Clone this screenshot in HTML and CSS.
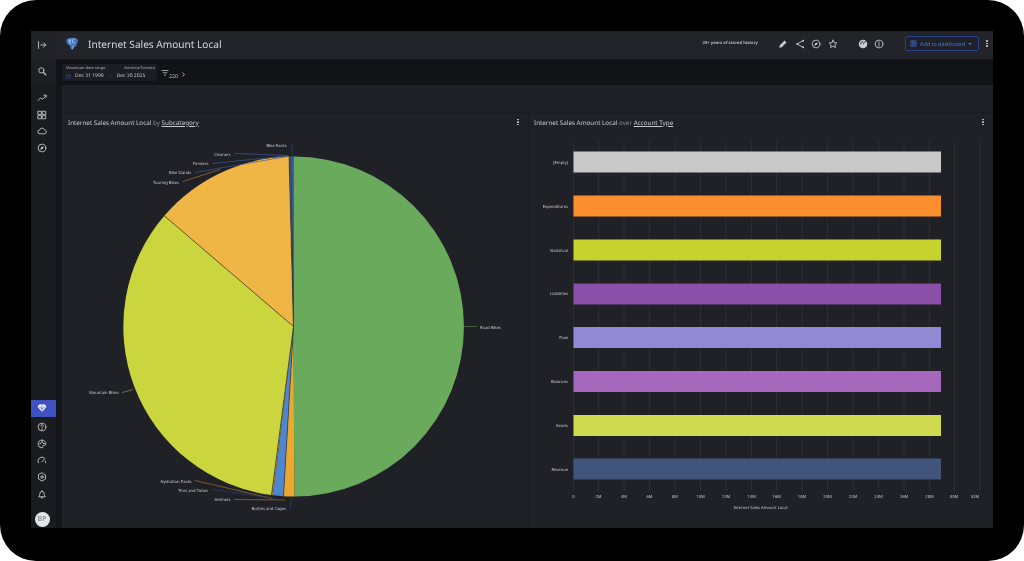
FILE: index.html
```html
<!DOCTYPE html>
<html lang="en">
<head>
<meta charset="utf-8">
<title>Internet Sales Amount Local</title>
<link rel="stylesheet" href="styles.css">
</head>
<body>
<div class="frame">
<div class="app">
  <nav class="sidebar">
    <div class="side-top"><svg class="ic" viewBox="0 0 16 16"><path d="M2.500 2.500v11M6 8h8M10.500 4.500 14 8l-3.500 3.500"/></svg></div>
    <div class="side-search"><svg class="ic" viewBox="0 0 16 16"><circle cx="7" cy="7" r="4.200"/><path d="m10.200 10.200 3.800 3.800" stroke-width="2"/></svg></div>
    <div class="side-nav">
      <div class="side-item"><svg class="ic" viewBox="0 0 16 16"><path d="M1.500 12 6 8l3 2 5.500-6M11 3.500h3.500V7"/></svg></div>
      <div class="side-item"><svg class="ic" viewBox="0 0 16 16"><path d="M2 2h5v5H2zM9 2h5v5H9zM2 9h5v5H2zM9 9h5v5H9z"/></svg></div>
      <div class="side-item"><svg class="ic" viewBox="0 0 16 16"><path d="M4.500 12.500a3 3 0 0 1-.5-6 4.200 4.200 0 0 1 8-.5 3.300 3.300 0 0 1 .3 6.500z"/></svg></div>
      <div class="side-item"><svg class="ic" viewBox="0 0 16 16"><circle cx="8" cy="8" r="6.200"/><path d="M11 5 9.300 9.300 5 11l1.700-4.300z" class="solid"/></svg></div>
    </div>
    <div class="side-bottom">
      <div class="side-item active"><svg class="ic" viewBox="0 0 16 16"><path class="solid" d="M3.500 2.500h9L15 6l-7 8.500L1 6z"/><path class="gem-cut" d="M4.500 6c0 2 2 3 3.500 3s3.500-1 3.500-3M8 4.500V13"/></svg></div>
      <div class="side-item"><svg class="ic" viewBox="0 0 16 16"><circle cx="8" cy="8" r="6.200"/><path d="M6 6.300a2 2 0 1 1 3 1.700c-.7.400-1 .8-1 1.700M8 11.200v.8"/></svg></div>
      <div class="side-item"><svg class="ic" viewBox="0 0 16 16"><path d="M8 1.800a6.200 6.200 0 1 0 0 12.400c1.500 0 1.500-1.200 1-2-.6-1 0-2 1.200-2h2c1.200 0 2-1 2-2.300C14.200 4.300 11.500 1.800 8 1.800z"/><circle cx="5" cy="7" r=".6"/><circle cx="8" cy="5" r=".6"/><circle cx="11" cy="7" r=".6"/></svg></div>
      <div class="side-item"><svg class="ic" viewBox="0 0 16 16"><path d="M2 12.500a6.500 6.500 0 0 1 9.500-8M14 12.500a6.500 6.500 0 0 0-.8-3.200M7.500 11 12.500 6" /></svg></div>
      <div class="side-item"><svg class="ic" viewBox="0 0 16 16"><path d="m8 1.500 5.600 3.200v6.600L8 14.500l-5.600-3.200V4.700z"/><circle cx="8" cy="8" r="2"/></svg></div>
      <div class="side-item"><svg class="ic" viewBox="0 0 16 16"><path d="M3 12c1-1 1.500-2 1.500-4.500a3.500 3.500 0 0 1 7 0c0 2.500.5 3.500 1.500 4.500zM6.800 14h2.400M8 2.500V4"/></svg></div>
      <div class="avatar-wrap"><span class="avatar">BP</span></div>
    </div>
  </nav>
  <div class="main">
    <header class="header">
      <svg class="logo" viewBox="0 0 16 16"><path class="logo-fill" d="M1.500 4C1.500 2 4 1 6 1.500 7.500.8 9.500.8 11 1.500c2-.6 4 .5 3.800 2.800-.1 1.500-1 2.700-1.500 3.700-.5 1.200-.2 3-1.300 3.200-1 .1-1.500-.8-2-1.500-.3 1.500-.2 3.500-1 4.300-1.200.8-2.500-.3-2.700-1.800-.1-1-.1-2-.3-3-1 .8-2.200.2-2.700-.9C2.500 7.300 1.500 6 1.500 4z"/><path class="logo-line" d="M6 2c-.8 1.500-1 4 .2 6.500M11 2c-1.700.3-3 1.500-2.500 3.500.3 1 1.500 1.500 2.500 1.200M4 4.500c1-.3 2 0 2.500.8M9.500 10c0 1-.2 2.500-.7 3.500"/></svg>
      <h1 class="title">Internet Sales Amount Local</h1>
      <span class="history">25+ years of stored history</span>
      <div class="tools">
        <svg class="ic" viewBox="0 0 16 16"><path class="solid" d="m2 14 1-4 7.500-7.500 3 3L6 13z"/></svg>
        <svg class="ic" viewBox="0 0 16 16"><path d="M13 2.500 3.500 8l9.500 5.500"/><circle class="solid" cx="13" cy="2.800" r="1.500"/><circle class="solid" cx="3.500" cy="8" r="1.500"/><circle class="solid" cx="13" cy="13.200" r="1.500"/></svg>
        <svg class="ic" viewBox="0 0 16 16"><circle cx="8" cy="8" r="6.200"/><path class="solid" d="M11 5 9.300 9.300 5 11l1.700-4.300z"/></svg>
        <svg class="ic" viewBox="0 0 16 16"><path d="m8 1.800 1.900 4 4.300.5-3.200 3 .9 4.300L8 11.400l-3.900 2.200.9-4.300-3.200-3 4.300-.5z"/></svg>
      </div>
      <div class="tools tools-b">
        <svg class="ic" viewBox="0 0 16 16"><circle class="solid" cx="8" cy="8" r="6.800"/><path class="cut" d="M8 8l5-5M4 8a4 4 0 0 1 4-4"/></svg>
        <svg class="ic" viewBox="0 0 16 16"><circle cx="8" cy="8" r="6.200"/><path d="M8 7.300V11.500M8 4.500v1"/></svg>
      </div>
      <button class="add-btn">
        <svg class="add-ic" viewBox="0 0 16 16"><path d="M2 2h12v12H2zM6 2v12M8 5.500h4M8 8h4M8 10.500h4"/></svg>
        <span>Add to dashboard</span>
        <span class="caret"></span>
      </button>
      <span class="kebab head-kebab"><i></i><i></i><i></i></span>
    </header>
    <div class="filters">
      <div class="date-box">
        <div class="date-top"><span>Maximum date range</span><span>America/Toronto</span></div>
        <div class="date-bottom">
          <svg class="cal" viewBox="0 0 16 16"><path d="M2 3.500h12V14H2zM2 7h12M5 1.500v3M11 1.500v3"/></svg>
          <span>Dec 31 1999</span><span class="date-arrow">→</span><span>Dec 30 2025</span>
        </div>
      </div>
      <div class="count">
        <svg class="filter-ic" viewBox="0 0 16 16"><path d="M1 3h14M3.500 7.500h9M6 12h4"/></svg>
        <span class="count-n">220</span>
        <svg class="chev" viewBox="0 0 16 16"><path d="m5 2 6 6-6 6"/></svg>
      </div>
    </div>
    <div class="content">
      <div class="spacer"></div>
      <div class="panels">
        <section class="panel">
          <div class="panel-head">
            <span class="panel-title">Internet Sales Amount Local <em>by</em> <u>Subcategory</u></span>
            <span class="kebab"><i></i><i></i><i></i></span>
          </div>
          <svg class="chart" viewBox="62 132 466 396">
            <path fill="#6aaa5c" d="M293.500 157A170 170 0 0 1 294.400 497L293.500 327Z"/>
            <path fill="#eba82f" d="M294.400 497A170 170 0 0 1 283.500 496.700L293.500 327Z"/>
            <path fill="#4f86d1" d="M283.500 496.700A170 170 0 0 1 273 495.800L293.500 327Z"/>
            <path fill="#a8853c" d="M273 495.800A170 170 0 0 1 271.500 495.600L293.500 327Z"/>
            <path fill="#cbd63f" d="M271.500 495.600A170 170 0 0 1 164.300 216.300L293.500 327Z"/>
            <path fill="#efb646" d="M164.300 216.300A170 170 0 0 1 289 157.100L293.500 327Z"/>
            <path fill="#3e5f9e" d="M289 157.100A170 170 0 0 1 293.500 157L293.500 327Z"/>
            <path class="seam" d="M293.500 327 164.300 216.300M293.500 327 289 157.100M293.500 327 291 157M293.500 327 271.500 495.600M293.500 327 283.500 496.700"/>
            <path class="ld ld-g" d="M463.500 327H477"/>
            <path class="ld ld-y" d="M122 393 133 390"/>
            <path class="ld ld-o" d="M195 481 272 499M234 500 285 500.500M183 182 220 170"/>
            <path class="ld ld-b" d="M212 490 275 499M292 145V157M290 510 292 497"/>
            <path class="ld ld-m" d="M235 154 288 156M212 164 286 156.500M195 173 287 157"/>
            <g class="lbl">
              <text x="480" y="329.500">Road Bikes</text>
              <text x="89" y="394.500">Mountain Bikes</text>
              <text x="160.500" y="483.800">Hydration Packs</text>
              <text x="178" y="492.800">Tires and Tubes</text>
              <text x="214.500" y="501.800">Helmets</text>
              <text x="251.500" y="510.800">Bottles and Cages</text>
              <text x="266.500" y="147">Bike Racks</text>
              <text x="214" y="156.500">Cleaners</text>
              <text x="193" y="165.500">Fenders</text>
              <text x="169" y="174.500">Bike Stands</text>
              <text x="153" y="184">Touring Bikes</text>
            </g>
          </svg>
        </section>
        <section class="panel">
          <div class="panel-head">
            <span class="panel-title">Internet Sales Amount Local <em>over</em> <u>Account Type</u></span>
            <span class="kebab"><i></i><i></i><i></i></span>
          </div>
          <svg class="chart" viewBox="529 132 464 396">
            <path class="grid" d="M573.500 141V491M598.500 141V491M624 141V491M649.500 141V491M675 141V491M700.500 141V491M726 141V491M751.500 141V491M776.500 141V491M802 141V491M827.500 141V491M853 141V491M878.500 141V491M904 141V491M929.500 141V491M954.500 141V491M980 141V491"/>
            <rect fill="#c9c9c9" x="573.500" y="152" width="367.500" height="21"/>
            <rect fill="#fb8f2e" x="573.500" y="196" width="367.500" height="21"/>
            <rect fill="#c8d22f" x="573.500" y="240" width="367.500" height="21"/>
            <rect fill="#8a4fa8" x="573.500" y="284" width="367.500" height="21"/>
            <rect fill="#9189d3" x="573.500" y="327.500" width="367.500" height="21"/>
            <rect fill="#a668bd" x="573.500" y="371.500" width="367.500" height="21"/>
            <rect fill="#d0da4e" x="573.500" y="415.500" width="367.500" height="21"/>
            <rect fill="#40547c" x="573.500" y="459" width="367.500" height="21"/>
            <g class="lbl lbl-end">
              <text x="568" y="164">(Empty)</text>
              <text x="568" y="208">Expenditures</text>
              <text x="568" y="252">Statistical</text>
              <text x="568" y="295.500">Liabilities</text>
              <text x="568" y="339.500">Flow</text>
              <text x="568" y="383.500">Balances</text>
              <text x="568" y="427.500">Assets</text>
              <text x="568" y="471">Revenue</text>
            </g>
            <g class="lbl lbl-mid">
              <text x="573.500" y="498.500">0</text>
              <text x="598.500" y="498.500">2M</text>
              <text x="624" y="498.500">4M</text>
              <text x="649.500" y="498.500">6M</text>
              <text x="675" y="498.500">8M</text>
              <text x="700.500" y="498.500">10M</text>
              <text x="726" y="498.500">12M</text>
              <text x="751.500" y="498.500">14M</text>
              <text x="776.500" y="498.500">16M</text>
              <text x="802" y="498.500">18M</text>
              <text x="827.500" y="498.500">20M</text>
              <text x="853" y="498.500">22M</text>
              <text x="878.500" y="498.500">24M</text>
              <text x="904" y="498.500">26M</text>
              <text x="929.500" y="498.500">28M</text>
              <text x="954" y="498.500">30M</text>
              <text x="975" y="498.500">32M</text>
              <text x="760.500" y="509.800">Internet Sales Amount Local</text>
            </g>
          </svg>
        </section>
      </div>
    </div>
  </div>
</div>
</div>
</body>
</html>
```
FILE: styles.css
```css
* { box-sizing: border-box; }
html, body { margin: 0; padding: 0; background: #fff; }
body { width: 1024px; height: 561px; overflow: hidden; font-family: "Noto Sans", "Open Sans", sans-serif; text-rendering: geometricPrecision; }
.frame { width: 1024px; height: 561px; background: #000; border-radius: 36px; padding: 31px; }
.app { display: flex; width: 962px; height: 497px; background: #15161a; filter: blur(.35px); }

.ic { width: 10px; height: 10px; fill: none; stroke: #c9cbd1; stroke-width: 1.400; stroke-linecap: round; stroke-linejoin: round; display: block; flex: none; }
.ic .solid { fill: #c9cbd1; stroke: none; }
.ic .cut { stroke: #22242a; fill: none; }

.sidebar { width: 25px; flex: none; display: flex; flex-direction: column; background: #1a1b20; }
.side-top { height: 28px; padding-right: 3px; display: flex; align-items: center; justify-content: center; background: #212329; }
.side-search { height: 26px; padding: 0 3px 3px 0; display: flex; align-items: center; justify-content: center; background: #1d1f25; }
.side-nav { margin-top: 4.500px; display: flex; flex-direction: column; }
.side-item { height: 16.700px; padding-right: 3px; display: flex; align-items: center; justify-content: center; }
.side-bottom { margin-top: auto; display: flex; flex-direction: column; }
.active { background: #3f50c0; margin-bottom: 2px; }
.active .solid { fill: #fff; }
.active .gem-cut { fill: none; stroke: #3f50c0; stroke-width: 1.200; }
.avatar-wrap { height: 26px; padding-right: 3px; display: flex; align-items: flex-end; justify-content: center; padding-bottom: 1px; }
.avatar { width: 15px; height: 15px; border-radius: 50%; background: #e4e5e9; color: #6d6f76; font-size: 7px; line-height: 15px; text-align: center; }

.main { flex: 1; min-width: 0; display: flex; flex-direction: column; }
.header { height: 28px; flex: none; background: #22242a; display: flex; align-items: center; padding: 0 5px 0 9px; }
.logo { width: 14px; height: 14px; flex: none; margin-top: -3px; }
.logo-fill { fill: #4679c4; }
.logo-line { fill: none; stroke: #e4ecf6; stroke-width: .800; }
.title { margin: -3px 0 0 9px; font-size: 10.100px; font-weight: 400; color: #d6d7db; white-space: nowrap; }
.history { margin: -3px 0 0 auto; font-size: 4.200px; font-weight: 700; color: #b5b7bd; white-space: nowrap; }
.tools { display: flex; gap: 6.700px; margin: -3px 0 0 20px; }
.tools-b { gap: 6px; margin-left: 20px; }
.add-btn { margin: -3px 0 0 21px; width: 74px; height: 15px; padding: 0 4px; display: flex; align-items: center; gap: 3px; background: #1f2128; border: 1px solid #2b4288; border-radius: 2px; color: #4c6fd6; font-family: inherit; font-size: 5.400px; white-space: nowrap; }
.add-ic { width: 7px; height: 7px; fill: none; stroke: #4c6fd6; stroke-width: 1.600; flex: none; }
.caret { margin-left: auto; margin-right: 3px; width: 0; height: 0; border-left: 2px solid transparent; border-right: 2px solid transparent; border-top: 2px solid #4c6fd6; }
.kebab { display: flex; flex-direction: column; gap: 1px; width: 2px; align-items: center; }
.kebab i { display: block; width: 1.600px; height: 1.600px; border-radius: 50%; background: #c9cbd1; }
.head-kebab { margin: -3px 0 0 7px; }

.filters { height: 26px; flex: none; display: flex; align-items: center; padding-left: 6px; background: #121317; }
.date-box { width: 95px; height: 17px; padding: 2px 2px 0 4px; background: #1c1d23; border-radius: 2px; color: #b0b2b8; }
.date-top { display: flex; justify-content: space-between; font-size: 3.900px; line-height: 6px; }
.date-bottom { display: flex; align-items: center; gap: 3px; font-size: 5px; line-height: 9px; color: #c5c7cc; }
.cal { width: 5px; height: 5px; margin-right: 1px; fill: none; stroke: #3c4f90; stroke-width: 1.500; flex: none; }
.date-arrow { color: #3c4f90; margin: 0 1px; }
.count { display: flex; align-items: flex-end; margin-left: 4px; color: #c5c7cc; font-size: 5.200px; padding-top: 4px; }
.filter-ic { width: 8px; height: 8px; fill: none; stroke: #c9cbd1; stroke-width: 1.500; margin-bottom: 3px; }
.count-n { line-height: 8px; }
.chev { width: 5px; height: 5px; fill: none; stroke: #d6d7db; stroke-width: 2.500; margin: 0 0 3px 3px; }

.content { flex: 1; min-height: 0; padding-left: 6px; display: flex; flex-direction: column; }
.spacer { height: 28px; flex: none; background: #1f2127; border-bottom: 1px solid #1a1b20; }
.panels { flex: 1; min-height: 0; display: flex; gap: 1px; background: #1a1b20; }
.panel { flex: 1; min-width: 0; display: flex; flex-direction: column; background: #1f2127; }
.panel + .panel { flex: 0 0 464px; }
.panel + .panel .panel-head { padding-left: 5px; }
.panel-head { height: 18px; flex: none; display: flex; align-items: center; justify-content: space-between; padding: 0 9px 0 6px; }
.panel-title { font-size: 6.300px; color: #c7c9ce; white-space: nowrap; }
.panel-title em { font-style: normal; color: #85878e; }
.panel-title u { text-underline-offset: 1px; text-decoration-thickness: .500px; }
.chart { display: block; flex: 1; min-height: 0; width: 100%; height: 396px; }

.seam { fill: none; stroke: #2a2b24; stroke-width: .600; }
.ld { fill: none; stroke-width: .700; }
.ld-g { stroke: #4f7f48; }
.ld-y { stroke: #8c9440; }
.ld-o { stroke: #a8702c; }
.ld-b { stroke: #2c3f6e; }
.ld-m { stroke: #3d5a96; }
.grid { fill: none; stroke: #33353c; stroke-width: .600; }
.lbl { fill: #c5c7cc; font-size: 4.100px; }
.lbl-end { text-anchor: end; }
.lbl-mid { text-anchor: middle; }
```
